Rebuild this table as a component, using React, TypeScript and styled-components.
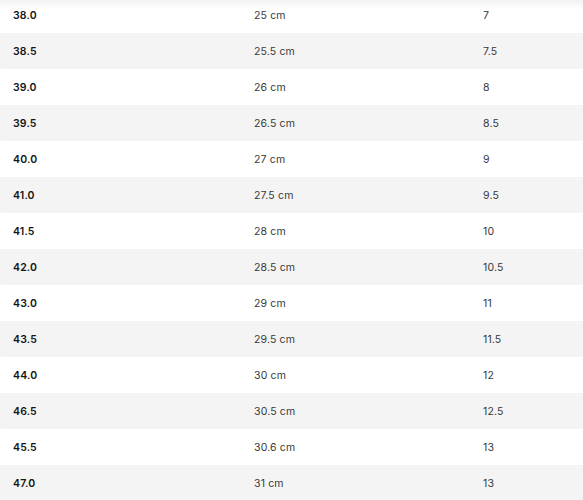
import React from "react";
import styled, { createGlobalStyle } from "styled-components";

const Global = createGlobalStyle`
  html, body { margin: 0; padding: 0; background: #fff; }
  body { font-family: "Inter", "Noto Sans", sans-serif; }
`;

const Viewport = styled.div`
  position: relative;
  width: 583px;
  height: 500px;
  overflow: hidden;
  background: #fff;
`;

const TopShade = styled.div`
  position: absolute;
  left: 0;
  right: 0;
  top: 0;
  height: 9px;
  background: linear-gradient(to bottom, rgba(0,0,0,0.05), rgba(0,0,0,0));
  pointer-events: none;
`;

const Table = styled.div`
  display: flex;
  flex-direction: column;
  margin-top: -3px;
`;

const Row = styled.div<{ $alt: boolean }>`
  display: grid;
  grid-template-columns: 241px 229px 1fr;
  align-items: center;
  height: 36px;
  padding-left: 13px;
  background: ${(p) => (p.$alt ? "#f4f4f4" : "#fff")};
  border-radius: ${(p) => (p.$alt ? "0 0 2px 2px" : "0")};
`;

const Cell = styled.span<{ $bold?: boolean }>`
  font-size: 10.5px;
  font-weight: ${(p) => (p.$bold ? 600 : 400)};
  color: ${(p) => (p.$bold ? "#151515" : "#383838")};
  letter-spacing: 0.15px;
  white-space: nowrap;
`;

const rows: [string, string, string][] = [
  ["38.0", "25 cm", "7"],
  ["38.5", "25.5 cm", "7.5"],
  ["39.0", "26 cm", "8"],
  ["39.5", "26.5 cm", "8.5"],
  ["40.0", "27 cm", "9"],
  ["41.0", "27.5 cm", "9.5"],
  ["41.5", "28 cm", "10"],
  ["42.0", "28.5 cm", "10.5"],
  ["43.0", "29 cm", "11"],
  ["43.5", "29.5 cm", "11.5"],
  ["44.0", "30 cm", "12"],
  ["46.5", "30.5 cm", "12.5"],
  ["45.5", "30.6 cm", "13"],
  ["47.0", "31 cm", "13"],
];

export default function App() {
  return (
    <>
      <Global />
      <Viewport>
        <Table>
          {rows.map((r, i) => (
            <Row key={i} $alt={i % 2 === 1}>
              <Cell $bold>{r[0]}</Cell>
              <Cell>{r[1]}</Cell>
              <Cell>{r[2]}</Cell>
            </Row>
          ))}
        </Table>
        <TopShade />
      </Viewport>
    </>
  );
}
